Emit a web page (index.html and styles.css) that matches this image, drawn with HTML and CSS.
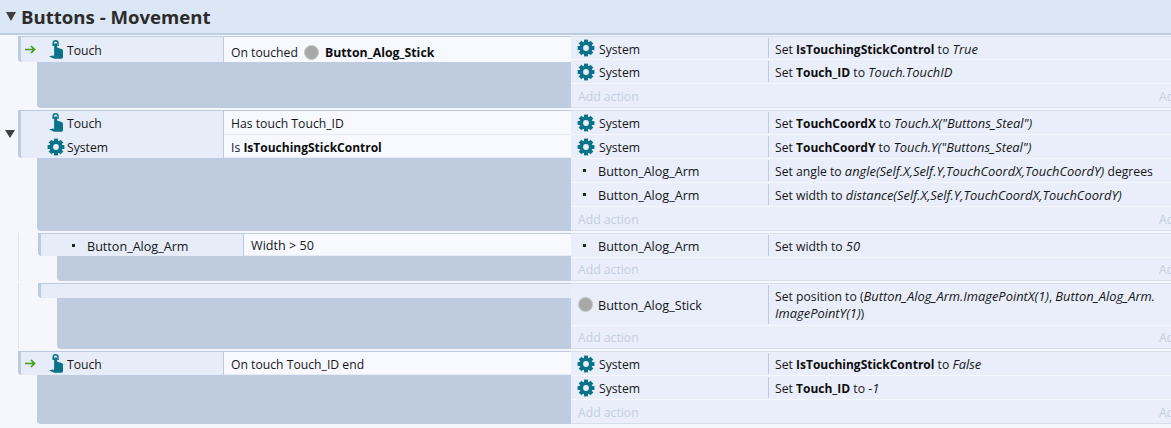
FILE: index.html
```html
<!DOCTYPE html>
<html lang="en">
<head>
<meta charset="utf-8">
<title>Buttons - Movement</title>
<link rel="stylesheet" href="styles.css">
</head>
<body>
<svg class="defs" width="0" height="0" aria-hidden="true">
  <symbol id="gear" viewBox="0 0 18 18">
    <circle cx="9" cy="9" r="4.7" fill="none" stroke="#0b7389" stroke-width="3.6"/>
    <g fill="#0b7389">
      <rect x="7" y="0.6" width="4" height="3.4"/>
      <rect x="7" y="14" width="4" height="3.4"/>
      <rect x="0.6" y="7" width="3.4" height="4"/>
      <rect x="14" y="7" width="3.4" height="4"/>
      <rect x="7" y="0.6" width="4" height="3.4" transform="rotate(45 9 9)"/>
      <rect x="7" y="0.6" width="4" height="3.4" transform="rotate(135 9 9)"/>
      <rect x="7" y="0.6" width="4" height="3.4" transform="rotate(225 9 9)"/>
      <rect x="7" y="0.6" width="4" height="3.4" transform="rotate(315 9 9)"/>
    </g>
  </symbol>
  <symbol id="hand" viewBox="0 0 14 19">
    <path d="M4.2 6V3.2a2.4 2.4 0 0 1 4.8 0V6" fill="none" stroke="#0b7389" stroke-width="1.5"/>
    <path d="M5.1 3.4h3v4.2l4.4 1.3c1 .3 1.5 1 1.5 2V17c0 1-.8 1.8-1.8 1.8H5.4L0 16.4l3.8-.9 1.3.4z" fill="#0b7389"/>
  </symbol>
  <symbol id="arrow" viewBox="0 0 11 9">
    <path d="M0 4.5h8M6 1l3.5 3.5L6 8" fill="none" stroke="#3f9a10" stroke-width="1.7"/>
  </symbol>
</svg>

<header class="group-head">
  <span class="tri tri-head"></span>
  <h1 class="group-title">Buttons - Movement</h1>
</header>

<main class="sheet">
  <section class="event e1">
    <div class="gutter"></div>
    <div class="conds">
      <div class="cond-list">
        <div class="cond cond-tall">
          <div class="who">
            <svg class="arrow"><use href="#arrow"/></svg>
            <svg class="hand"><use href="#hand"/></svg>
            <span>Touch</span>
          </div>
          <div class="what">On touched<i class="ball ball-inline"></i><b class="name">Button_Alog_Stick</b></div>
        </div>
      </div>
      <div class="blank"></div>
    </div>
    <div class="acts">
      <div class="act"><div class="who-a"><svg class="gear"><use href="#gear"/></svg><span>System</span></div><div class="do">Set <b>IsTouchingStickControl</b> to <em>True</em></div></div>
      <div class="act"><div class="who-a"><svg class="gear"><use href="#gear"/></svg><span>System</span></div><div class="do">Set <b>Touch_ID</b> to <em>Touch.TouchID</em></div></div>
      <div class="add"><span>Add action</span><span class="add-r">Add action</span></div>
    </div>
  </section>

  <section class="event e2">
    <div class="gutter"><span class="tri tri-event"></span></div>
    <div class="conds">
      <div class="cond-list">
        <div class="cond cond-h24">
          <div class="who">
            <span class="arrow-slot"></span>
            <svg class="hand"><use href="#hand"/></svg>
            <span>Touch</span>
          </div>
          <div class="what what-mid">Has touch Touch_ID</div>
        </div>
        <div class="cond cond-h23">
          <div class="who who-sys">
            <span class="arrow-slot arrow-slot-gear"></span>
            <svg class="gear"><use href="#gear"/></svg>
            <span>System</span>
          </div>
          <div class="what what-mid"><span>Is <b>IsTouchingStickControl</b></span></div>
        </div>
      </div>
      <div class="blank"></div>
    </div>
    <div class="acts">
      <div class="act"><div class="who-a"><svg class="gear"><use href="#gear"/></svg><span>System</span></div><div class="do">Set <b>TouchCoordX</b> to <em>Touch.X("Buttons_Steal")</em></div></div>
      <div class="act"><div class="who-a"><svg class="gear"><use href="#gear"/></svg><span>System</span></div><div class="do">Set <b>TouchCoordY</b> to <em>Touch.Y("Buttons_Steal")</em></div></div>
      <div class="act"><div class="who-a"><span class="icon-slot"><i class="dot"></i></span><span class="name">Button_Alog_Arm</span></div><div class="do">Set angle to <em>angle(Self.X,Self.Y,TouchCoordX,TouchCoordY)</em> degrees</div></div>
      <div class="act"><div class="who-a"><span class="icon-slot"><i class="dot"></i></span><span class="name">Button_Alog_Arm</span></div><div class="do">Set width to <em>distance(Self.X,Self.Y,TouchCoordX,TouchCoordY)</em></div></div>
      <div class="add"><span>Add action</span><span class="add-r">Add action</span></div>
    </div>
  </section>

  <section class="event e3">
    <div class="gutter gutter-sub"></div>
    <div class="conds">
      <div class="cond-list">
        <div class="cond cond-h22">
          <div class="who">
            <span class="arrow-slot arrow-slot-sm"></span>
            <span class="icon-slot"><i class="dot"></i></span>
            <span class="name">Button_Alog_Arm</span>
          </div>
          <div class="what what-mid what-wide">Width &gt; 50</div>
        </div>
      </div>
      <div class="blank"></div>
    </div>
    <div class="acts">
      <div class="act"><div class="who-a"><span class="icon-slot"><i class="dot"></i></span><span class="name">Button_Alog_Arm</span></div><div class="do">Set width to <em>50</em></div></div>
      <div class="add"><span>Add action</span><span class="add-r">Add action</span></div>
    </div>
  </section>

  <section class="event e4">
    <div class="gutter gutter-sub"></div>
    <div class="conds">
      <div class="cond-list">
        <div class="cond cond-empty"></div>
      </div>
      <div class="blank"></div>
    </div>
    <div class="acts">
      <div class="act act-tall"><div class="who-a"><i class="ball"></i><span class="name">Button_Alog_Stick</span></div><div class="do do-wrap">Set position to (<em>Button_Alog_Arm.ImagePointX(1)</em>, <em>Button_Alog_Arm.<br>ImagePointY(1)</em>)</div></div>
      <div class="add"><span>Add action</span><span class="add-r">Add action</span></div>
    </div>
  </section>

  <section class="event e5">
    <div class="gutter"></div>
    <div class="conds">
      <div class="cond-list">
        <div class="cond cond-h23">
          <div class="who">
            <svg class="arrow"><use href="#arrow"/></svg>
            <svg class="hand"><use href="#hand"/></svg>
            <span>Touch</span>
          </div>
          <div class="what what-mid">On touch Touch_ID end</div>
        </div>
      </div>
      <div class="blank"></div>
    </div>
    <div class="acts">
      <div class="act"><div class="who-a"><svg class="gear"><use href="#gear"/></svg><span>System</span></div><div class="do">Set <b>IsTouchingStickControl</b> to <em>False</em></div></div>
      <div class="act"><div class="who-a"><svg class="gear"><use href="#gear"/></svg><span>System</span></div><div class="do">Set <b>Touch_ID</b> to <em>-1</em></div></div>
      <div class="add"><span>Add action</span><span class="add-r">Add action</span></div>
    </div>
  </section>
</main>
</body>
</html>
```
FILE: styles.css
```css
* { box-sizing: border-box; }

html, body {
  margin: 0;
  height: 100%;
}

body {
  width: 1171px;
  height: 428px;
  overflow: hidden;
  background: #f5f7fd;
  color: #161616;
  font-family: "Open Sans", "Noto Sans", sans-serif;
  font-size: 12.2px;
}

.defs { display: block; height: 0; }

.group-head {
  display: flex;
  align-items: center;
  height: 35px;
  padding-left: 6px;
  background: #dce7f5;
  border-bottom: 2px solid #bccde2;
}

.group-title {
  margin: 0 0 0 5px;
  font-size: 18.6px;
  font-weight: 700;
  color: #2c2c2c;
}

.tri {
  display: block;
  width: 0;
  height: 0;
  border-left: 5.5px solid transparent;
  border-right: 5.5px solid transparent;
  border-top: 8px solid #3f3f3f;
}

.tri-head {
  border-left-width: 5px;
  border-right-width: 5px;
  border-top-width: 9px;
}

.sheet {
  display: flex;
  flex-direction: column;
  gap: 2px;
  padding-top: 1px;
}

.event { display: flex; }

.e1 { height: 72px; }
.e2 { height: 121px; }
.e3 { height: 48px; }
.e4 { height: 66px; }
.e5 { height: 73px; }

.gutter { flex: none; width: 18px; }
.gutter .tri { margin: 20px 0 0 5px; }

.gutter-sub {
  width: 38px;
  background: linear-gradient(#dfe5f1, #dfe5f1) 18px 0 / 1px 100% no-repeat;
}

.conds {
  flex: 1;
  min-width: 0;
  display: flex;
  flex-direction: column;
}

.cond-list {
  border-left: 3px solid #bccbe0;
  border-top: 1px solid #bccbe0;
  border-bottom-left-radius: 4px;
  background: #e6edf8;
}

.cond {
  display: flex;
  height: 23px;
}

.cond-tall { height: 25px; }
.cond-h24 { height: 24px; }
.cond-h23 { height: 23px; }
.cond-h22 { height: 22px; }
.cond-empty { height: 14px; }

.who {
  flex: none;
  width: 203px;
  display: flex;
  align-items: center;
  height: 100%;
  padding-left: 4px;
  border-right: 1px solid #bccbe0;
}

.who > span:last-child {
  margin-left: 4px;
  margin-top: 2px;
}

.who-sys > span:last-child { margin-left: 2px; }

.cond-tall .who { padding-bottom: 1px; }
.cond-h24 .who { padding-bottom: 2px; }

.arrow {
  flex: none;
  width: 11px;
  height: 9px;
  margin-right: 13px;
}

.arrow-slot { flex: none; width: 24px; }
.arrow-slot-gear { width: 22px; }
.arrow-slot-sm { width: 20px; }

.hand {
  flex: none;
  width: 14px;
  height: 19px;
}

.what {
  flex: 1;
  min-width: 0;
  display: flex;
  align-items: center;
  padding-left: 7px;
  padding-top: 6px;
  background: #f7f9ff;
  white-space: pre;
}

.what-mid {
  padding-top: 2px;
  margin-bottom: 1px;
}

.what-wide { font-size: 12.6px; }

b { font-weight: 700; color: #0d0d0d; font-size: 12px; }

.name { font-size: 12.6px; }
b.name { font-size: 12.3px; }

.blank {
  flex: 1;
  margin-left: 19px;
  background: #bfcbdf;
  border-bottom-left-radius: 4px;
}

.acts {
  flex: none;
  width: 600px;
  display: flex;
  flex-direction: column;
  gap: 1px;
  border-top: 1px solid #d5deec;
  border-bottom: 1px solid #d5deec;
  background: #f5f7fd;
}

.act {
  flex: none;
  display: flex;
  height: 23px;
  background: #e9eefa;
}

.e1 .act:first-child { height: 22px; }

.act-tall { height: 41px; }

.who-a {
  flex: none;
  width: 198px;
  display: flex;
  align-items: center;
  padding-left: 6px;
  border-right: 1px solid #bccbe0;
  margin: 1px 0;
}

.who-a > span:last-child {
  margin-left: 4px;
  margin-top: 2px;
}

.who-a .icon-slot { margin-left: -1px; }

.do {
  flex: 1;
  min-width: 0;
  padding-left: 6px;
  padding-top: 1px;
  line-height: 23px;
  white-space: nowrap;
}

.do-wrap {
  line-height: 17px;
  padding-top: 4px;
}

em { font-style: italic; font-size: 12.9px; }

.add {
  flex: 1;
  display: flex;
  justify-content: space-between;
  align-items: center;
  padding-left: 7px;
  padding-top: 1px;
  background: #e9eefa;
  color: #c3cfe2;
}

.add-r {
  width: 12px;
  overflow: hidden;
  white-space: nowrap;
}

.gear {
  flex: none;
  width: 18px;
  height: 18px;
}

.icon-slot {
  flex: none;
  width: 18px;
  display: flex;
  justify-content: center;
}

.dot {
  display: block;
  width: 3px;
  height: 3px;
  margin-right: 1px;
  background: #12301a;
}

.ball {
  flex: none;
  display: block;
  width: 15px;
  height: 15px;
  margin: 0 1px;
  border-radius: 50%;
  background: #a8a8a8;
  border: 1px solid #c6c6c6;
}

.ball-inline {
  margin: 0 6px;
}
```
